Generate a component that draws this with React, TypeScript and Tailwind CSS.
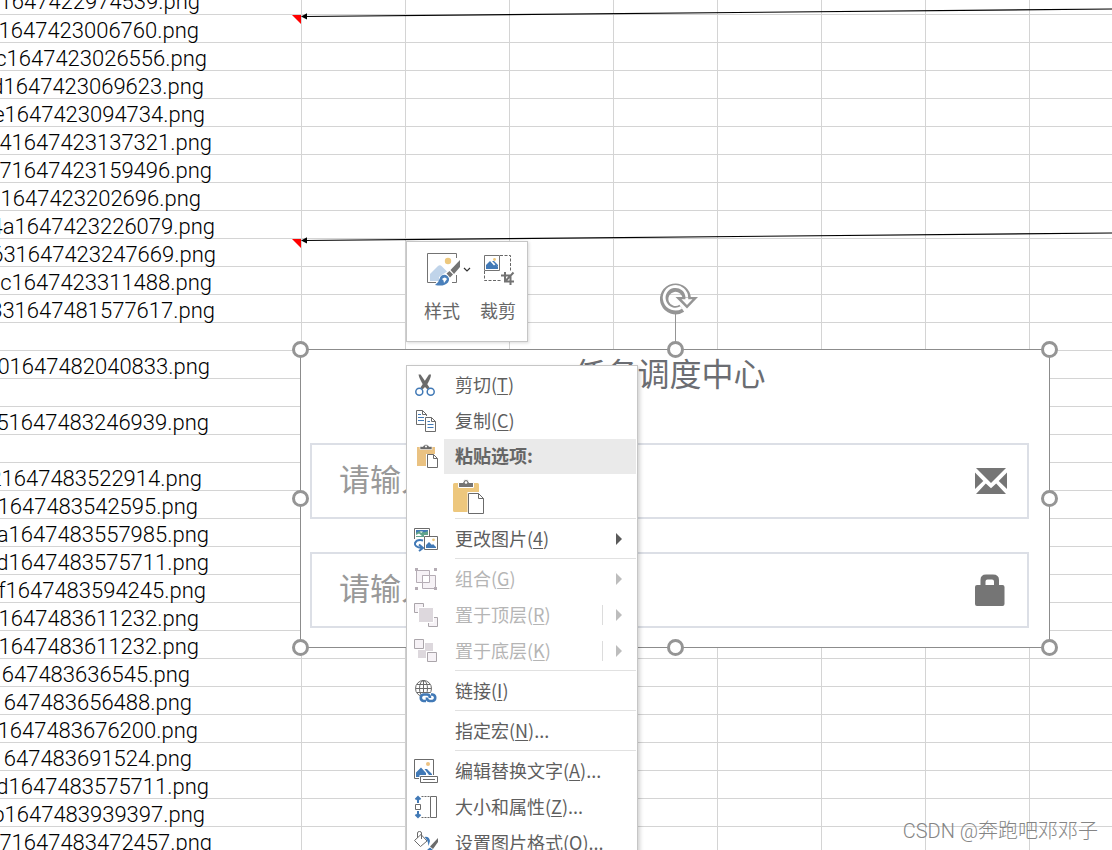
import type { ReactNode } from "react";

type Row = { name: string; end: number; marked?: boolean };

// `end` is the distance from the window edge to the end of the scrolled file name.
const rows: Row[] = [
  { name: "1647422974539.png", end: 200 },
  { name: "1647423006760.png", end: 199, marked: true },
  { name: "c1647423026556.png", end: 207 },
  { name: "d1647423069623.png", end: 204 },
  { name: "e1647423094734.png", end: 205 },
  { name: "41647423137321.png", end: 212 },
  { name: "71647423159496.png", end: 212 },
  { name: "31647423202696.png", end: 201 },
  { name: "4a1647423226079.png", end: 215 },
  { name: "631647423247669.png", end: 216, marked: true },
  { name: "2c1647423311488.png", end: 212 },
  { name: "331647481577617.png", end: 215 },
  { name: "", end: 0 },
  { name: "01647482040833.png", end: 210 },
  { name: "", end: 0 },
  { name: "51647483246939.png", end: 209 },
  { name: "", end: 0 },
  { name: "21647483522914.png", end: 202 },
  { name: "1647483542595.png", end: 198 },
  { name: "a1647483557985.png", end: 209 },
  { name: "d1647483575711.png", end: 209 },
  { name: "f1647483594245.png", end: 206 },
  { name: "1647483611232.png", end: 199 },
  { name: "1647483611232.png", end: 199 },
  { name: "1647483636545.png", end: 190 },
  { name: "1647483656488.png", end: 192 },
  { name: "1647483676200.png", end: 198 },
  { name: "1647483691524.png", end: 192 },
  { name: "d1647483575711.png", end: 209 },
  { name: "b1647483939397.png", end: 205 },
  { name: "71647483472457.png", end: 212 },
];

const blankColumns = [0, 1, 2, 3, 4, 5, 6, 7];

function Sheet() {
  return (
    <table className="-mt-[14px] w-full table-fixed border-collapse">
      <colgroup>
        <col className="w-[301px]" />
        {blankColumns.map((c) => (
          <col key={c} className={c < 7 ? "w-[104px]" : ""} />
        ))}
      </colgroup>
      <tbody>
        {rows.map((row, i) => (
          <tr key={i}>
            <td className="h-7 border-r border-b border-[#d4d4d4] p-0">
              <div className="relative flex h-[27px]">
                <span
                  className="flex justify-end font-['Roboto','Noto_Sans_CJK_SC',sans-serif] text-[22px] leading-[31px] font-light whitespace-nowrap text-black"
                  style={{ width: row.end }}
                >
                  {row.name}
                </span>
                {row.marked && (
                  <svg viewBox="0 0 9 9" className="absolute top-0 right-0 h-[9px] w-[9px]">
                    <path d="M0 0H9V9Z" fill="#f00" />
                  </svg>
                )}
              </div>
            </td>
            {blankColumns.map((c) => (
              <td
                key={c}
                className={
                  c < 7
                    ? "border-r border-b border-[#d4d4d4] p-0"
                    : "border-b border-[#d4d4d4] p-0"
                }
              />
            ))}
          </tr>
        ))}
      </tbody>
    </table>
  );
}

function CommentLine({ place }: { place: string }) {
  return (
    <svg viewBox="0 0 812 14" fill="none" className={`absolute left-[300px] h-[14px] w-[812px] ${place}`}>
      <path d="M4 10.5 812 3" stroke="#000" strokeWidth="1.1" />
      <path d="M1 10.5 7 7.2V13.4Z" fill="#000" />
    </svg>
  );
}

function Handle({ place }: { place: string }) {
  return (
    <span
      className={`absolute h-[17px] w-[17px] rounded-full border-[3px] border-[#959595] bg-white ${place}`}
    />
  );
}

function MailIcon() {
  return (
    <svg viewBox="0 0 32 26" className="h-[26px] w-8" fill="#757575">
      <path d="M1 0H31L16 15Z" />
      <path d="M0 4.5 8.3 13 0 21Z" />
      <path d="M32 4.5 23.7 13 32 21Z" />
      <path d="M1 26 10.8 15.5 16 20.3 21.2 15.5 31 26Z" />
    </svg>
  );
}

function LockIcon() {
  return (
    <svg viewBox="0 0 32 32" className="h-8 w-8" fill="#757575">
      <path
        fillRule="evenodd"
        d="M5.5 11V6Q5.5.5 11 .5H18Q24 .5 24 6V11H27.5Q29.5 11 29.5 13V30Q29.5 32 27.5 32H2Q0 32 0 30V13Q0 11 2 11ZM10.5 11H19V7.5Q19 5.5 17 5.5H12.5Q10.5 5.5 10.5 7.5Z"
      />
    </svg>
  );
}

function Field({ type, icon }: { type: string; icon: ReactNode }) {
  return (
    <label className="flex h-[76px] items-center border-2 border-[#dcdfe6] pr-[20px] pl-[27px]">
      <input
        type={type}
        aria-label="请输入"
        placeholder="请输入"
        className="min-w-0 flex-1 bg-transparent pb-[6px] text-[31px] leading-[44px] outline-none placeholder:text-[#999]"
      />
      {icon}
    </label>
  );
}

function SelectedPicture() {
  return (
    <section className="absolute top-[349px] left-[300px] w-[750px] border border-[#8c8c8c] bg-white pr-[20px] pb-[19px] pl-[9px]">
      <h1 className="pb-[49px] text-center text-[32px] leading-[44px] text-[#6b6d72]">
        任务调度中心
      </h1>
      <div className="flex flex-col gap-[33px]">
        <Field type="text" icon={<MailIcon />} />
        <Field type="password" icon={<LockIcon />} />
      </div>
      <svg viewBox="0 0 40 66" fill="none" className="absolute -top-[67px] left-[359px] h-[66px] w-10">
        <path d="M15.5 30V66" stroke="#959595" />
        <path d="M21.8 25.3A11.3 11.3 0 1 1 26.8 16" stroke="#959595" strokeWidth="8.4" />
        <path d="M21.3 24.5A11.3 11.3 0 1 1 26.8 15" stroke="#fff" strokeWidth="2.8" />
        <path d="M15.5 14H38L27 25.5Z" fill="#959595" />
        <path d="M21.5 16.2H25.4V14.5H28.2V16.2H32.5L27 22Z" fill="#fff" />
      </svg>
      <Handle place="-top-[9px] -left-[9px]" />
      <Handle place="-top-[9px] left-[366px]" />
      <Handle place="-top-[9px] -right-[9px]" />
      <Handle place="top-[140px] -left-[9px]" />
      <Handle place="top-[140px] -right-[9px]" />
      <Handle place="-bottom-[9px] -left-[9px]" />
      <Handle place="-bottom-[9px] left-[366px]" />
      <Handle place="-bottom-[9px] -right-[9px]" />
    </section>
  );
}

function MiniToolbar() {
  return (
    <div className="absolute top-[241px] left-[406px] flex gap-2 border border-[#c6c6c6] bg-white pt-[9px] pr-[11px] pb-[18px] pl-[17px] text-lg text-[#666] shadow-[1px_1px_3px_rgba(0,0,0,0.15)]">
      <button type="button" className="flex w-12 flex-col items-start gap-[10px]">
        <svg viewBox="0 0 48 36" fill="none" className="h-9 w-12">
          <path d="M32.5 7V2.5H3.5V31.5H12M28 31.5H32.5V24" stroke="#737373" />
          <circle cx="24" cy="10" r="3.2" fill="#edc87e" />
          <path d="M6 23 14 15Q16 13.500 18 15.500L23 20.500 15 26V30H6Z" fill="#c0d4ea" />
          <path d="M11 34Q15 31 15.500 28Q17 23 22 24Q27 27 24 31.500Q20 36 11 34Z" fill="#4a80bb" />
          <path d="M18 28Q21 25 23 28L20 32Q20 29 18 28Z" fill="#fff" />
          <path d="M22.500 22.500 25.500 20 29 23.500 26 26.500Z" fill="#737373" />
          <path d="M26.500 19 36 9V16L30 23Z" fill="#737373" />
          <path d="M40 17 43 20 46 17" stroke="#333" strokeWidth="1.2" />
        </svg>
        <span className="leading-[26px]">样式</span>
      </button>
      <button type="button" className="flex w-9 flex-col items-start gap-[10px]">
        <svg viewBox="0 0 36 36" fill="none" className="h-9 w-9">
          <path d="M20 4.500H30.500V20M4.500 20V29.500H21" stroke="#666" strokeDasharray="3 1.500" />
          <path d="M4.500 4.500H19.500V19.500H4.500Z" stroke="#737373" />
          <path d="M6 14 10 10 14 14.500 15.500 13 18 16V18H6Z" fill="#4179b6" />
          <path d="M12 10H14L18 14V16Z" fill="#4179b6" />
          <circle cx="14.500" cy="8.500" r="1.400" fill="#edc87e" />
          <path d="M25 21V30.500H34M21 24.500H30.500V34M25.500 30 33.500 21.500" stroke="#737373" strokeWidth="2" />
        </svg>
        <span className="leading-[26px]">裁剪</span>
      </button>
    </div>
  );
}

const G = "#6b6b6b";
const B = "#4179b6";

const icons: Record<string, ReactNode> = {
  cut: (
    <>
      <path d="M4.500 1.500 6.500 1.500 15.500 14.500 13.500 16.500 9.500 12.500Q5 5 4.500 1.500Z" fill={G} />
      <path d="M17 1.500 15 1.500 6.500 14.500 8.500 16.500 12.500 12.500Q17 5 17 1.500Z" fill={G} />
      <circle cx="5.300" cy="18.700" r="3.500" stroke={B} strokeWidth="1.500" />
      <circle cx="16.700" cy="18.700" r="3.500" stroke={B} strokeWidth="1.500" />
    </>
  ),
  copy: (
    <>
      <path d="M10.500 15.500H2.500V1.500H8.500L12.500 5.500V7M8.500 1.500V5.500H12.500" stroke={G} />
      <path d="M4 5.500H7M4 8.500H10M4 11.500H10" stroke={B} />
      <path d="M11.500 8.500H17.500L21.500 12.500V22.500H11.500ZM17.500 8.500V12.500H21.500" stroke={G} fill="#fff" />
      <path d="M13.500 12.500H16M13.500 15.500H19.500M13.500 18.500H19.500" stroke={B} />
    </>
  ),
  paste: (
    <>
      <path d="M3 2H21V9H12V21H3Z" fill="#eac282" />
      <path d="M6 4.500V1.500H9Q10 -.5 12 -.5T15 1.500H18V4.500Z" fill={G} stroke="#fff" strokeWidth=".6" />
      <circle cx="12" cy="1.500" r="1" fill="#fff" />
      <path d="M13.500 9.500H19.500L23.500 13.500V22.500H13.500ZM19.500 9.500V13.500H23.500" stroke={G} fill="#fff" />
    </>
  ),
  change: (
    <>
      <path d="M.5 12V1.500H15.500V9" stroke={G} />
      <path d="M2 3H14V8H10V10H2Z" fill="#60a38c" />
      <path d="M2 3H14V4Q10 6 8 4.500T2 6Z" fill={B} />
      <path d="M6 4.500H9L7 6ZM2 8 5 6.500 8 9H2Z" fill="#fff" />
      <path d="M9 13.500Q3 12 1 16Q0 20 8 21M5 17.500 9 21 5 24" stroke={B} strokeWidth="2" />
      <path d="M10.500 9.500H23.500V22.500H10.500Z" stroke={G} fill="#fff" />
      <path d="M12 18 15 15 18 18 19 17 22 20V21H12Z" fill={B} />
      <circle cx="19.500" cy="12.800" r="1.400" fill="#edc87e" />
    </>
  ),
  group: (
    <g stroke="#b5adb5">
      <path d="M2.500 3.500H15.500V15.500H2.500Z" fill="#f6f2f6" />
      <path d="M8.500 8.500H21.500V21.500H8.500Z" fill="#f6f2f6" />
      <path d="M8.500 8.500H15.500V15.500H8.500Z" fill="#fff" />
      <path d="M1 2.500H4M20 2.500H23M1 21.500H4M20 21.500H23" strokeWidth="3" />
    </g>
  ),
  front: (
    <>
      <path d="M.5.5H9.500V9.500H.5ZM14.500 14.500H23.500V23.500H14.500Z" stroke="#aaa5aa" fill="#f6f2f6" />
      <path d="M4.500 4.500H19.500V19.500H4.500Z" fill="#ddd8dd" stroke="#fff" />
    </>
  ),
  back: (
    <>
      <path d="M11 4H19V12H11ZM4 11H12V19H4Z" fill="#ddd8dd" />
      <path d="M.5.5H9.500V9.500H.5ZM13.500 13.500H22.500V22.500H13.500Z" stroke="#aaa5aa" fill="#f6f2f6" />
    </>
  ),
  link: (
    <>
      <circle cx="9.500" cy="9.500" r="8" stroke={G} />
      <path d="M1.500 9.500H17.500M9.500 1.500V17.500M3 5.500H16M3 13.500H16" stroke={G} />
      <ellipse cx="9.500" cy="9.500" rx="4" ry="8" stroke={G} />
      <path d="M9 14H20Q24 15 24 20L20 24H8L4 19Z" fill="#fff" />
      <path
        d="M12 22H9.500A3.300 3.300 0 0 1 9.500 15.500H13.500Q16 16 16 19M17 15.500H18.500A3.300 3.300 0 0 1 18.500 22H15.500Q12.500 21.500 13 18.500"
        stroke={B}
        strokeWidth="2.600"
      />
    </>
  ),
  alt: (
    <>
      <path d="M19.500 16V.5H.5V19.500H5" stroke={G} />
      <path d="M2 13.500 7 8.500 12 14V16H5.500V18H2ZM10.500 10H13L18 15V16H15Z" fill={B} />
      <circle cx="14" cy="5" r="2" fill="#edc282" />
      <path d="M6.500 17.500H23.500V23.500H6.500ZM9 20.500H21" stroke={G} />
    </>
  ),
  size: (
    <>
      <path d="M4 8V3M1.500 4.500 4 2 6.500 4.500M4 16V21M1.500 19.500 4 22 6.500 19.500" stroke={B} strokeWidth="2" />
      <path d="M1.500 9.500H6.500V14.500H1.500ZM16.500 1.500H22.500V22.500H16.500Z" stroke={G} />
      <path d="M7.500 1.500H16M7.500 22.500H16" stroke={G} strokeDasharray="2 1" />
    </>
  ),
  format: (
    <>
      <path d="M7 3.500 13 10 6.500 15.500.5 9.500Z" stroke={G} />
      <path d="M3.500 7V2Q3.500.5 5.500.5T7.500 2V8" stroke={G} />
      <path d="M10.500 6Q15 5 16 10L14.500 15Q14 9 10.500 6Z" fill={B} />
      <path d="M10 23Q13 21 13.500 18.500L16 16.500 19 19Q17 24 10 23Z" fill={B} />
      <path d="M16 15.500 24 7V11L19 18Z" fill={G} />
    </>
  ),
};

type EntryProps = {
  icon?: string;
  label: string;
  accel: string;
  dots?: boolean;
  disabled?: boolean;
  submenu?: boolean;
  split?: boolean;
};

function Entry({ icon, label, accel, dots, disabled, submenu, split }: EntryProps) {
  return (
    <button
      type="button"
      disabled={disabled}
      className="flex h-9 w-full items-center pl-[7px] text-left text-[#5e5e5e] disabled:text-[#b5b5b5]"
    >
      <svg viewBox="0 0 24 24" fill="none" className="h-6 w-6 shrink-0 overflow-visible">
        {icon && icons[icon]}
      </svg>
      <span className="ml-[17px] flex-1 pb-[3px]">
        {label}(<u className="decoration-1 underline-offset-2">{accel}</u>){dots && "..."}
      </span>
      {split && <span className="mr-[13px] h-5 w-px bg-[#dcdcdc]" />}
      {submenu && (
        <svg viewBox="0 0 6 12" className="mr-[15px] h-3 w-[6px]">
          <path d="M0 0 6 6 0 12Z" fill={disabled ? "#bdbdbd" : "#5a5a5a"} />
        </svg>
      )}
    </button>
  );
}

function Separator() {
  return (
    <div className="h-1 pt-px pr-px pl-12">
      <div className="h-px bg-[#e1e1e1]" />
    </div>
  );
}

function ContextMenu() {
  return (
    <div className="absolute top-[365px] left-[406px] w-[232px] border border-[#c6c6c6] bg-white pt-px text-lg shadow-[2px_2px_4px_rgba(0,0,0,0.18)]">
      <Entry icon="cut" label="剪切" accel="T" />
      <Entry icon="copy" label="复制" accel="C" />
      <div className="flex h-9 pr-px">
        <div className="flex w-[37px] items-center pl-[7px]">
          <svg viewBox="0 0 24 24" fill="none" className="h-6 w-6 overflow-visible">
            {icons.paste}
          </svg>
        </div>
        <div className="h-[35px] flex-1 bg-[#eaeaea] pl-[11px] leading-[33px] font-bold text-[#666]">
          粘贴选项:
        </div>
      </div>
      <div className="flex h-[42px] items-center pl-[46px]">
        <button type="button" aria-label="粘贴">
          <svg viewBox="0 0 32 36" fill="none" className="block h-9 w-8">
            <path d="M1.500 5H24.500Q26 5 26 6.500V14H15V34H1.500Q0 34 0 32.500V6.500Q0 5 1.500 5Z" fill="#edc77d" />
            <path d="M5.500 9.500V4.500H10Q10 1.500 13 1.500T16 4.500H20.500V9.500Z" fill="#737373" stroke="#fff" />
            <circle cx="13" cy="4.500" r="1.300" fill="#fff" />
            <path d="M14.500 14H25.500L31.500 20V36H14.500Z" fill="#fff" />
            <path d="M15.500 15.500H25.500L30.500 20.500V35.500H15.500ZM25.500 15.500V20.500H30.500" stroke="#6b6b6b" />
          </svg>
        </button>
      </div>
      <Separator />
      <Entry icon="change" label="更改图片" accel="4" submenu />
      <Separator />
      <Entry icon="group" label="组合" accel="G" disabled submenu />
      <Entry icon="front" label="置于顶层" accel="R" disabled submenu split />
      <Entry icon="back" label="置于底层" accel="K" disabled submenu split />
      <Separator />
      <Entry icon="link" label="链接" accel="I" />
      <Separator />
      <Entry label="指定宏" accel="N" dots />
      <Separator />
      <Entry icon="alt" label="编辑替换文字" accel="A" dots />
      <Entry icon="size" label="大小和属性" accel="Z" dots />
      <Entry icon="format" label="设置图片格式" accel="O" dots />
    </div>
  );
}

export default function App() {
  return (
    <main className="relative h-screen overflow-hidden bg-white font-['Noto_Sans_CJK_SC',sans-serif]">
      <Sheet />
      <CommentLine place="top-[6px]" />
      <CommentLine place="top-[230px]" />
      <SelectedPicture />
      <MiniToolbar />
      <ContextMenu />
      <p className="absolute right-[14px] bottom-[4px] font-['Roboto','Noto_Sans_CJK_SC',sans-serif] text-xl leading-[30px] font-light text-[#858585]">
        CSDN @奔跑吧邓邓子
      </p>
    </main>
  );
}
